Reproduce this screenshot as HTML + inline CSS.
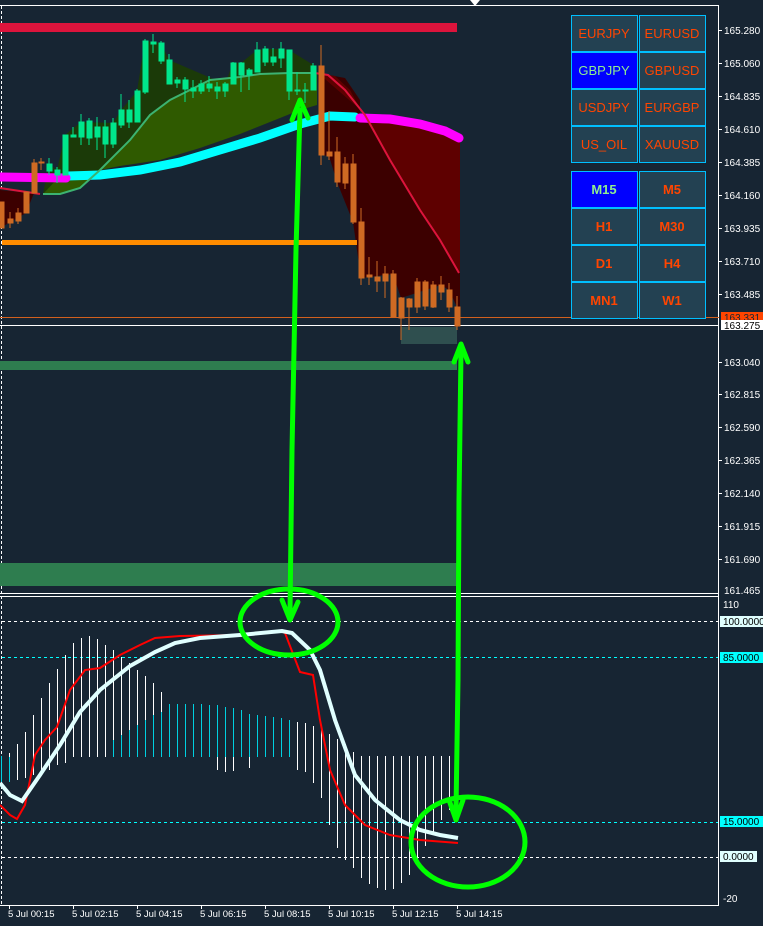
<!DOCTYPE html>
<html><head><meta charset="utf-8"><style>
html,body{margin:0;padding:0;background:#172533;}
svg{display:block}
text{font-family:"Liberation Sans",sans-serif;}
</style></head><body>
<svg width="763" height="926" viewBox="0 0 763 926" xmlns="http://www.w3.org/2000/svg">
<rect width="763" height="926" fill="#172533"/>
<line x1="0" y1="5.5" x2="719" y2="5.5" stroke="#fff" stroke-width="1"/>
<line x1="718.5" y1="5" x2="718.5" y2="905" stroke="#fff"/>
<line x1="1.5" y1="6" x2="1.5" y2="905" stroke="#fff" stroke-dasharray="3,2"/>
<polygon points="470,0 480,0 475,6" fill="#fff"/>
<line x1="0" y1="593.5" x2="719" y2="593.5" stroke="#fff"/>
<line x1="0" y1="596.5" x2="719" y2="596.5" stroke="#fff"/>
<line x1="0" y1="905.5" x2="719" y2="905.5" stroke="#fff"/>

<polygon points="43,194 60,194 80,188 100,170 130,140 150,115 170,100 190,90 210,80 240,77 260,74 290,73 315,73 315,66 289,50 281,49 265,49 257,50 241,63 233,63 225,84 169,60 161,43 145,41 137,91 121,110 113,123 81,122 65,135 57,170 49,164" fill="#1b3a08"/>
<polygon points="43,194 60,194 80,188 100,170 130,140 150,115 170,100 190,90 210,80 240,77 260,74 290,73 317,73 317,105 300,110 270,122 240,134 200,148 160,160 120,166 100,170 80,174 60,176" fill="#2f5a00"/>
<polygon points="318,73 345,78 360,100 360,118 345,120 320,124" fill="#3a0000"/>
<polygon points="318,73 335,76 350,90 365,118 390,160 420,210 460,273 460,140 430,128 400,120 370,118" fill="#5e0000"/>
<polygon points="318,124 360,118 365,118 390,160 420,210 460,273 460,310 457,307 449,290 441,285 401,298 393,274 361,278 353,222 337,182 329,156 321,155" fill="#3c0000"/>
<polygon points="0,190 40,194 40,195 34,193 26,213 0,228" fill="#3c0000"/>

<rect x="0" y="23" width="457" height="9" fill="#dc143c"/>
<rect x="2" y="240" width="355" height="5" fill="#ff8c00"/>
<line x1="0" y1="317.5" x2="719" y2="317.5" stroke="#d2601e"/>
<line x1="0" y1="325.5" x2="719" y2="325.5" stroke="#fff"/>
<rect x="401" y="327" width="56" height="17" fill="#2f4f4f"/>
<rect x="0" y="361" width="457" height="9" fill="#2e7d4f"/>
<rect x="0" y="563" width="457" height="23" fill="#2e7d4f"/>

<polyline points="68,176 100,175 140,170 180,162 220,150 260,138 300,124 330,116 355,117" fill="none" stroke="#00ffff" stroke-width="9" stroke-linecap="round"/>
<polyline points="0,177 66,178" fill="none" stroke="#ff00ff" stroke-width="9" stroke-linecap="round"/>
<polyline points="360,118 390,119 420,124 445,131 459,138" fill="none" stroke="#ff00ff" stroke-width="9" stroke-linecap="round"/>
<polyline points="43,194 60,194 80,188 100,170 130,140 150,115 170,100 190,90 210,80 240,77 260,74 290,73 315,73" fill="none" stroke="#3cb371" stroke-width="2"/>
<polyline points="0,188 20,191 40,194" fill="none" stroke="#dc143c" stroke-width="2"/>
<polyline points="315,73 328,75 345,90 365,115 390,160 420,210 440,240 459,273" fill="none" stroke="#dc143c" stroke-width="2"/>

<g fill="#00e68c" stroke="#00e68c" stroke-width="1">
<line x1="49" y1="158" x2="49" y2="175"/><rect x="47" y="164" width="5" height="7"/>
<line x1="57" y1="167" x2="57" y2="183"/><rect x="55" y="170" width="5" height="5"/>
<rect x="63" y="135" width="5" height="40"/>
<line x1="73" y1="127" x2="73" y2="137"/><rect x="71" y="135" width="5" height="2"/>
<line x1="81" y1="114" x2="81" y2="145"/><rect x="79" y="122" width="5" height="15"/>
<line x1="89" y1="118" x2="89" y2="145"/><rect x="87" y="121" width="5" height="17"/>
<line x1="97" y1="117" x2="97" y2="150"/><rect x="95" y="127" width="5" height="10"/>
<line x1="105" y1="120" x2="105" y2="158"/><rect x="103" y="127" width="5" height="17"/>
<line x1="113" y1="118" x2="113" y2="148"/><rect x="111" y="123" width="5" height="21"/>
<line x1="121" y1="94" x2="121" y2="128"/><rect x="119" y="110" width="5" height="15"/>
<line x1="129" y1="100" x2="129" y2="128"/><rect x="127" y="110" width="5" height="12"/>
<line x1="137" y1="89" x2="137" y2="122"/><rect x="135" y="91" width="5" height="31"/>
<line x1="145" y1="39" x2="145" y2="94"/><rect x="143" y="41" width="5" height="51"/>
<line x1="153" y1="34" x2="153" y2="53"/><rect x="151" y="42" width="5" height="2"/>
<line x1="161" y1="41" x2="161" y2="64"/><rect x="159" y="43" width="5" height="18"/>
<line x1="169" y1="54" x2="169" y2="84"/><rect x="167" y="60" width="5" height="24"/>
<line x1="177" y1="77" x2="177" y2="88"/><rect x="175" y="80" width="5" height="3"/>
<line x1="185" y1="77" x2="185" y2="102"/><rect x="183" y="80" width="5" height="9"/>
<line x1="193" y1="80" x2="193" y2="98"/><rect x="191" y="88" width="5" height="3"/>
<line x1="201" y1="80" x2="201" y2="94"/><rect x="199" y="84" width="5" height="7"/>
<line x1="209" y1="76" x2="209" y2="92"/><rect x="207" y="84" width="5" height="4"/>
<line x1="217" y1="82" x2="217" y2="99"/><rect x="215" y="87" width="5" height="4"/>
<line x1="225" y1="82" x2="225" y2="97"/><rect x="223" y="84" width="5" height="7"/>
<line x1="233" y1="62" x2="233" y2="84"/><rect x="231" y="63" width="5" height="21"/>
<line x1="241" y1="62" x2="241" y2="92"/><rect x="239" y="63" width="5" height="12"/>
<line x1="249" y1="68" x2="249" y2="90"/><rect x="247" y="70" width="5" height="5"/>
<line x1="257" y1="42" x2="257" y2="72"/><rect x="255" y="50" width="5" height="22"/>
<line x1="265" y1="46" x2="265" y2="66"/><rect x="263" y="49" width="5" height="13"/>
<line x1="273" y1="48" x2="273" y2="66"/><rect x="271" y="57" width="5" height="5"/>
<line x1="281" y1="42" x2="281" y2="68"/><rect x="279" y="49" width="5" height="9"/>
<rect x="287" y="50" width="5" height="41"/><line x1="289" y1="91" x2="289" y2="100"/>
<line x1="297" y1="72" x2="297" y2="95"/><rect x="295" y="90" width="5" height="1"/>
<line x1="305" y1="83" x2="305" y2="103"/><rect x="303" y="90" width="5" height="1"/>
<line x1="313" y1="63" x2="313" y2="90"/><rect x="311" y="66" width="5" height="24"/>
</g>
<g fill="#cf6a23" stroke="#cf6a23" stroke-width="1">
<rect x="0" y="202" width="4" height="26"/>
<line x1="10" y1="212" x2="10" y2="228"/><rect x="8" y="219" width="5" height="4"/>
<line x1="18" y1="208" x2="18" y2="224"/><rect x="16" y="213" width="5" height="8"/>
<rect x="24" y="192" width="5" height="21"/>
<line x1="34" y1="159" x2="34" y2="193"/><rect x="32" y="163" width="5" height="30"/>
<line x1="41" y1="158" x2="41" y2="170"/><rect x="39" y="162" width="5" height="1"/>
<line x1="321" y1="45" x2="321" y2="165"/><rect x="319" y="66" width="5" height="89"/>
<line x1="329" y1="111" x2="329" y2="160"/><rect x="327" y="152" width="5" height="4"/>
<line x1="337" y1="137" x2="337" y2="187"/><rect x="335" y="152" width="5" height="30"/>
<line x1="345" y1="157" x2="345" y2="189"/><rect x="343" y="164" width="5" height="19"/>
<line x1="353" y1="154" x2="353" y2="224"/><rect x="351" y="164" width="5" height="58"/>
<line x1="361" y1="208" x2="361" y2="285"/><rect x="359" y="222" width="5" height="56"/>
<line x1="369" y1="257" x2="369" y2="285"/><rect x="367" y="275" width="5" height="2"/>
<line x1="377" y1="261" x2="377" y2="292"/><rect x="375" y="277" width="5" height="4"/>
<line x1="385" y1="266" x2="385" y2="298"/><rect x="383" y="274" width="5" height="7"/>
<line x1="393" y1="270" x2="393" y2="317"/><rect x="391" y="274" width="5" height="43"/>
<line x1="401" y1="297" x2="401" y2="340"/><rect x="399" y="298" width="5" height="20"/>
<line x1="409" y1="298" x2="409" y2="330"/><rect x="407" y="299" width="5" height="8"/>
<line x1="417" y1="278" x2="417" y2="313"/><rect x="415" y="282" width="5" height="25"/>
<line x1="425" y1="280" x2="425" y2="310"/><rect x="423" y="282" width="5" height="24"/>
<line x1="433" y1="281" x2="433" y2="308"/><rect x="431" y="285" width="5" height="22"/>
<line x1="441" y1="276" x2="441" y2="300"/><rect x="439" y="285" width="5" height="7"/>
<line x1="449" y1="283" x2="449" y2="312"/><rect x="447" y="290" width="5" height="17"/>
<line x1="457" y1="296" x2="457" y2="330"/><rect x="455" y="307" width="5" height="19"/>
</g>

<g font-size="10" fill="#fff">
<text x="724" y="34">165.280</text><text x="724" y="67">165.060</text><text x="724" y="100">164.835</text>
<text x="724" y="133">164.610</text><text x="724" y="166">164.385</text><text x="724" y="199">164.160</text>
<text x="724" y="232">163.935</text><text x="724" y="265">163.710</text><text x="724" y="298">163.485</text>
<text x="724" y="366">163.040</text><text x="724" y="398">162.815</text><text x="724" y="431">162.590</text>
<text x="724" y="464">162.365</text><text x="724" y="497">162.140</text><text x="724" y="530">161.915</text>
<text x="724" y="563">161.690</text><text x="724" y="594">161.465</text>
</g>
<g stroke="#fff"><line x1="719" y1="30.5" x2="722" y2="30.5"/><line x1="719" y1="63.5" x2="722" y2="63.5"/><line x1="719" y1="96.5" x2="722" y2="96.5"/><line x1="719" y1="129.5" x2="722" y2="129.5"/><line x1="719" y1="162.5" x2="722" y2="162.5"/><line x1="719" y1="195.5" x2="722" y2="195.5"/><line x1="719" y1="228.5" x2="722" y2="228.5"/><line x1="719" y1="261.5" x2="722" y2="261.5"/><line x1="719" y1="294.5" x2="722" y2="294.5"/><line x1="719" y1="362.5" x2="722" y2="362.5"/><line x1="719" y1="394.5" x2="722" y2="394.5"/><line x1="719" y1="427.5" x2="722" y2="427.5"/><line x1="719" y1="460.5" x2="722" y2="460.5"/><line x1="719" y1="493.5" x2="722" y2="493.5"/><line x1="719" y1="526.5" x2="722" y2="526.5"/><line x1="719" y1="559.5" x2="722" y2="559.5"/></g>
<rect x="721" y="312" width="42" height="10" fill="#ff4500"/>
<text x="724" y="321" font-size="10" fill="#172533">163.331</text>
<rect x="721" y="320" width="42" height="10" fill="#fff"/>
<text x="724" y="329" font-size="10" fill="#000">163.275</text>

<g font-size="13" text-anchor="middle" stroke-width="1">
<rect x="571.5" y="15.5" width="66" height="36" fill="#234152" stroke="#00bfff"/><text x="604" y="38" fill="#ff4500">EURJPY</text>
<rect x="639.5" y="15.5" width="66" height="36" fill="#234152" stroke="#00bfff"/><text x="672" y="38" fill="#ff4500">EURUSD</text>
<rect x="571.5" y="52.5" width="66" height="36" fill="#0000ff" stroke="#00bfff"/><text x="604" y="75" fill="#90ee90">GBPJPY</text>
<rect x="639.5" y="52.5" width="66" height="36" fill="#234152" stroke="#00bfff"/><text x="672" y="75" fill="#ff4500">GBPUSD</text>
<rect x="571.5" y="89.5" width="66" height="36" fill="#234152" stroke="#00bfff"/><text x="604" y="112" fill="#ff4500">USDJPY</text>
<rect x="639.5" y="89.5" width="66" height="36" fill="#234152" stroke="#00bfff"/><text x="672" y="112" fill="#ff4500">EURGBP</text>
<rect x="571.5" y="126.5" width="66" height="36" fill="#234152" stroke="#00bfff"/><text x="604" y="149" fill="#ff4500">US_OIL</text>
<rect x="639.5" y="126.5" width="66" height="36" fill="#234152" stroke="#00bfff"/><text x="672" y="149" fill="#ff4500">XAUUSD</text>
</g>
<g font-size="13" font-weight="bold" text-anchor="middle">
<rect x="571.5" y="171.5" width="66" height="36" fill="#0000ff" stroke="#00bfff"/><text x="604" y="194" fill="#90ee90">M15</text>
<rect x="639.5" y="171.5" width="66" height="36" fill="#234152" stroke="#00bfff"/><text x="672" y="194" fill="#ff4500">M5</text>
<rect x="571.5" y="208.5" width="66" height="36" fill="#234152" stroke="#00bfff"/><text x="604" y="231" fill="#ff4500">H1</text>
<rect x="639.5" y="208.5" width="66" height="36" fill="#234152" stroke="#00bfff"/><text x="672" y="231" fill="#ff4500">M30</text>
<rect x="571.5" y="245.5" width="66" height="36" fill="#234152" stroke="#00bfff"/><text x="604" y="268" fill="#ff4500">D1</text>
<rect x="639.5" y="245.5" width="66" height="36" fill="#234152" stroke="#00bfff"/><text x="672" y="268" fill="#ff4500">H4</text>
<rect x="571.5" y="282.5" width="66" height="36" fill="#234152" stroke="#00bfff"/><text x="604" y="305" fill="#ff4500">MN1</text>
<rect x="639.5" y="282.5" width="66" height="36" fill="#234152" stroke="#00bfff"/><text x="672" y="305" fill="#ff4500">W1</text>
</g>

<line x1="2" y1="621.5" x2="718" y2="621.5" stroke="#fff" stroke-dasharray="3,3"/>
<line x1="2" y1="657.5" x2="718" y2="657.5" stroke="#00ffff" stroke-dasharray="3,3"/>
<line x1="2" y1="822.5" x2="718" y2="822.5" stroke="#00ffff" stroke-dasharray="3,3"/>
<line x1="2" y1="857.5" x2="718" y2="857.5" stroke="#fff" stroke-dasharray="3,3"/>

<g stroke="#fff" stroke-width="1">
<line x1="9.5" y1="753" x2="9.5" y2="782"/><line x1="17.5" y1="744" x2="17.5" y2="780"/>
<line x1="25.5" y1="732" x2="25.5" y2="778"/><line x1="33.5" y1="715" x2="33.5" y2="775"/>
<line x1="41.5" y1="698" x2="41.5" y2="775"/><line x1="49.5" y1="683" x2="49.5" y2="770"/>
<line x1="57.5" y1="669" x2="57.5" y2="765"/><line x1="65.5" y1="655" x2="65.5" y2="763"/>
<line x1="73.5" y1="643" x2="73.5" y2="757"/><line x1="81.5" y1="638" x2="81.5" y2="757"/>
<line x1="89.5" y1="636" x2="89.5" y2="757"/><line x1="97.5" y1="639" x2="97.5" y2="757"/>
<line x1="105.5" y1="645" x2="105.5" y2="757"/><line x1="113.5" y1="650" x2="113.5" y2="757"/>
<line x1="121.5" y1="657" x2="121.5" y2="757"/><line x1="129.5" y1="663" x2="129.5" y2="757"/>
<line x1="137.5" y1="670" x2="137.5" y2="757"/><line x1="145.5" y1="676" x2="145.5" y2="757"/>
<line x1="153.5" y1="683" x2="153.5" y2="757"/><line x1="161.5" y1="692" x2="161.5" y2="757"/>
<line x1="217.5" y1="705" x2="217.5" y2="770"/><line x1="225.5" y1="707" x2="225.5" y2="772"/>
<line x1="233.5" y1="708" x2="233.5" y2="771"/><line x1="249.5" y1="714" x2="249.5" y2="768"/>
<line x1="297.5" y1="722" x2="297.5" y2="770"/><line x1="305.5" y1="723" x2="305.5" y2="772"/>
<line x1="313.5" y1="726" x2="313.5" y2="783"/><line x1="321.5" y1="730" x2="321.5" y2="798"/>
<line x1="329.5" y1="734" x2="329.5" y2="825"/><line x1="337.5" y1="739" x2="337.5" y2="848"/>
<line x1="345.5" y1="744" x2="345.5" y2="860"/><line x1="353.5" y1="752" x2="353.5" y2="868"/>
<line x1="361.5" y1="756" x2="361.5" y2="878"/><line x1="369.5" y1="756" x2="369.5" y2="884"/>
<line x1="377.5" y1="756" x2="377.5" y2="888"/><line x1="385.5" y1="756" x2="385.5" y2="890"/>
<line x1="393.5" y1="756" x2="393.5" y2="889"/><line x1="401.5" y1="756" x2="401.5" y2="883"/>
<line x1="409.5" y1="756" x2="409.5" y2="875"/><line x1="417.5" y1="756" x2="417.5" y2="862"/>
<line x1="425.5" y1="756" x2="425.5" y2="846"/><line x1="433.5" y1="756" x2="433.5" y2="832"/>
<line x1="441.5" y1="756" x2="441.5" y2="820"/><line x1="449.5" y1="756" x2="449.5" y2="810"/>
<line x1="457.5" y1="756" x2="457.5" y2="800"/>
</g>
<g stroke="#00d0e0" stroke-width="1">
<line x1="1.5" y1="756" x2="1.5" y2="782"/><line x1="9.5" y1="757" x2="9.5" y2="782"/>
<line x1="169.5" y1="704" x2="169.5" y2="757"/><line x1="177.5" y1="704" x2="177.5" y2="757"/>
<line x1="185.5" y1="704" x2="185.5" y2="757"/><line x1="193.5" y1="704" x2="193.5" y2="757"/>
<line x1="201.5" y1="704" x2="201.5" y2="757"/><line x1="209.5" y1="705" x2="209.5" y2="757"/>
<line x1="217.5" y1="705" x2="217.5" y2="757"/><line x1="225.5" y1="707" x2="225.5" y2="757"/>
<line x1="233.5" y1="708" x2="233.5" y2="757"/><line x1="241.5" y1="710" x2="241.5" y2="757"/>
<line x1="249.5" y1="714" x2="249.5" y2="757"/><line x1="257.5" y1="715" x2="257.5" y2="757"/>
<line x1="265.5" y1="716" x2="265.5" y2="757"/><line x1="273.5" y1="717" x2="273.5" y2="757"/>
<line x1="281.5" y1="718" x2="281.5" y2="757"/><line x1="289.5" y1="720" x2="289.5" y2="757"/>
<line x1="113.5" y1="740" x2="113.5" y2="757"/><line x1="121.5" y1="735" x2="121.5" y2="757"/>
<line x1="129.5" y1="730" x2="129.5" y2="757"/><line x1="137.5" y1="725" x2="137.5" y2="757"/>
<line x1="145.5" y1="720" x2="145.5" y2="757"/><line x1="153.5" y1="715" x2="153.5" y2="757"/>
<line x1="161.5" y1="712" x2="161.5" y2="757"/>
</g>

<polyline points="0,805 10,815 17,819 25,805 35,755 45,740 57,727 70,690 85,670 100,668 120,655 140,645 155,638 180,636 240,635 280,631 285,633 300,672 313,675 320,720 330,770 345,805 365,825 390,835 420,840 458,843" fill="none" stroke="#ff0000" stroke-width="2"/>
<polyline points="0,783 10,795 22,801 40,775 60,745 80,712 100,690 130,666 155,652 175,643 200,638 240,635 282,631 292,633 310,650 320,670 335,720 355,775 375,800 400,820 420,830 440,835 458,838" fill="none" stroke="#e0ffff" stroke-width="4"/>

<g font-size="10">
<text x="723" y="608" fill="#fff">110</text>
<rect x="720" y="616" width="43" height="11" fill="#e0ffff"/><text x="723" y="625" fill="#000">100.0000</text>
<rect x="720" y="652" width="43" height="11" fill="#00ffff"/><text x="723" y="661" fill="#000">85.0000</text>
<rect x="720" y="816" width="43" height="11" fill="#00ffff"/><text x="723" y="825" fill="#000">15.0000</text>
<rect x="720" y="851" width="37" height="11" fill="#e0ffff"/><text x="723" y="860" fill="#000">0.0000</text>
<text x="723" y="902" fill="#fff">-20</text>
</g>

<g font-size="9.5" fill="#fff">
<text x="8" y="917">5 Jul 00:15</text><text x="72" y="917">5 Jul 02:15</text>
<text x="136" y="917">5 Jul 04:15</text><text x="200" y="917">5 Jul 06:15</text>
<text x="264" y="917">5 Jul 08:15</text><text x="328" y="917">5 Jul 10:15</text>
<text x="392" y="917">5 Jul 12:15</text><text x="456" y="917">5 Jul 14:15</text>
</g>
<g stroke="#fff"><line x1="9.5" y1="905" x2="9.5" y2="909"/><line x1="73.5" y1="905" x2="73.5" y2="909"/><line x1="137.5" y1="905" x2="137.5" y2="909"/><line x1="201.5" y1="905" x2="201.5" y2="909"/><line x1="265.5" y1="905" x2="265.5" y2="909"/><line x1="329.5" y1="905" x2="329.5" y2="909"/><line x1="393.5" y1="905" x2="393.5" y2="909"/><line x1="457.5" y1="905" x2="457.5" y2="909"/></g>

<g stroke="#00ff00" fill="none" stroke-width="5" stroke-linecap="round" stroke-linejoin="round">
<polyline points="290,612 292,450 296,250 300,110"/>
<polyline points="292,120 300,100 308,118"/>
<polyline points="282,600 290,620 298,602"/>
<polyline points="461,352 459,500 458,680 456,810"/>
<polyline points="454,362 461,344 468,362"/>
<polyline points="449,800 456,820 463,800"/>
<ellipse cx="289" cy="622" rx="49" ry="33"/>
<ellipse cx="468" cy="842" rx="57" ry="45"/>
</g>
</svg>
</body></html>
